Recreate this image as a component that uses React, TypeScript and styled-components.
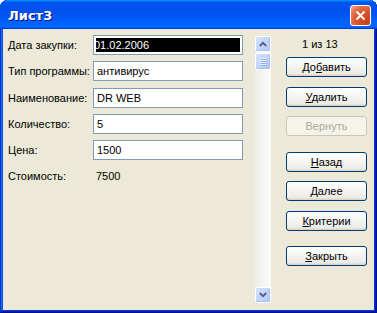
import React from 'react';
import styled, { createGlobalStyle } from 'styled-components';

const GlobalStyle = createGlobalStyle`
  html, body {
    margin: 0;
    padding: 0;
    background: #ffffff;
  }
  body {
    font-family: 'Liberation Sans', Arial, sans-serif;
    font-size: 11px;
  }
`;

const Window = styled.div`
  width: 377px;
  height: 313px;
  display: flex;
  flex-direction: column;
  border-radius: 8px 8px 0 0;
  overflow: hidden;
  background: #0055e5;
  box-shadow: inset -1px -1px #00138c, inset 1px 1px #0831d9, inset -2px -2px #001ea0,
    inset 2px 2px #166aee, inset -3px -3px #003bda, inset 3px 3px #0855dd;
`;

const TitleBar = styled.div`
  height: 29px;
  flex: none;
  display: flex;
  align-items: center;
  justify-content: space-between;
  padding: 0 6px 0 8px;
  box-sizing: border-box;
  background: linear-gradient(
    180deg,
    #0997ff,
    #0053ee 8%,
    #0050ee 40%,
    #0066ff 88%,
    #0066ff 93%,
    #005bff 95%,
    #003dd7 96%,
    #003dd7
  );
`;

const Title = styled.span`
  color: #ffffff;
  font-family: 'DejaVu Sans', 'Liberation Sans', sans-serif;
  font-weight: bold;
  font-size: 13px;
  letter-spacing: 0;
  text-shadow: 1px 1px #0f1089;
  margin-top: 1px;
`;

const CloseButton = styled.div`
  width: 21px;
  height: 21px;
  box-sizing: border-box;
  border: 1px solid #ffffff;
  border-radius: 3px;
  display: flex;
  align-items: center;
  justify-content: center;
  margin-top: 2px;
  background: radial-gradient(circle at 85% 85%, #c63f18 0%, #d8532b 45%, #e5734f 75%, #f2b09a 100%);
`;

const Body = styled.div`
  flex: 1;
  margin: 0 3px 3px 3px;
  background: #ece9d8;
  display: flex;
  align-items: stretch;
  padding: 6px 0 7px 5px;
  box-sizing: border-box;
`;

const Form = styled.div`
  display: grid;
  grid-template-columns: 85px 150px;
  grid-auto-rows: 20px;
  row-gap: 6.25px;
  align-content: start;
`;

const Label = styled.div`
  display: flex;
  align-items: center;
  color: #000000;
  white-space: nowrap;
`;

const Field = styled.div<{ $selected?: boolean }>`
  box-sizing: border-box;
  border: 1px solid #7f9db9;
  background: #ffffff;
  padding: 2px;
  display: flex;
  overflow: hidden;
`;

const FieldText = styled.span<{ $selected?: boolean }>`
  flex: 1;
  display: flex;
  align-items: center;
  padding-left: ${(p) => (p.$selected ? '0' : '1px')};
  text-indent: ${(p) => (p.$selected ? '-2px' : '0')};
  background: ${(p) => (p.$selected ? '#000000' : 'transparent')};
  color: ${(p) => (p.$selected ? '#ffffff' : '#000000')};
  white-space: nowrap;
  overflow: hidden;
`;

const Value = styled.div`
  display: flex;
  align-items: center;
  padding-left: 3px;
`;

const ScrollBar = styled.div`
  width: 16px;
  margin: 1px 0 0 12px;
  display: flex;
  flex-direction: column;
  background: linear-gradient(90deg, #eeede5, #fcfcfe);
`;

const ScrollButton = styled.div`
  width: 16px;
  height: 16px;
  box-sizing: border-box;
  border: 1px solid #ffffff;
  border-radius: 2px;
  background: linear-gradient(135deg, #d7e3fd 0%, #c3d4fb 50%, #b4c8f6 100%);
  box-shadow: inset -1px -1px #a9bff1;
  display: flex;
  align-items: center;
  justify-content: center;
`;

const Thumb = styled(ScrollButton)`
  height: 17px;
  margin-top: 1px;
`;

const Track = styled.div`
  flex: 1;
`;

const Side = styled.div`
  width: 81px;
  margin-left: 15px;
  display: flex;
  flex-direction: column;
  gap: 15.5px;
`;

const Counter = styled.div`
  height: 18px;
  display: flex;
  align-items: center;
  padding-left: 16px;
  margin-bottom: -11.5px;
`;

const ButtonGroup = styled.div`
  display: flex;
  flex-direction: column;
  gap: 9.5px;
`;

const Button = styled.div<{ $disabled?: boolean }>`
  height: 20px;
  box-sizing: border-box;
  border: 1px solid ${(p) => (p.$disabled ? '#c9c7ba' : '#003c74')};
  border-radius: 3px;
  display: flex;
  align-items: center;
  justify-content: center;
  color: ${(p) => (p.$disabled ? '#aca899' : '#000000')};
  background: ${(p) =>
    p.$disabled ? '#f5f4ea' : 'linear-gradient(180deg, #ffffff, #ecebe6 86%, #d6d0c5)'};
  u {
    text-decoration: underline;
    text-underline-offset: 1px;
  }
`;

const Arrow = ({ up }: { up?: boolean }) => (
  <svg width="8" height="6" viewBox="0 0 8 6">
    <path
      d={up ? 'M0.8 5 L4 1.8 L7.2 5' : 'M0.8 1 L4 4.2 L7.2 1'}
      fill="none"
      stroke="#4d6185"
      strokeWidth="1.8"
    />
  </svg>
);

const Grip = () => (
  <svg width="7" height="8" viewBox="0 0 7 8">
    {[0, 2, 4, 6].map((y) => (
      <g key={y}>
        <rect x="0" y={y} width="6" height="1" fill="#eef4fe" />
        <rect x="1" y={y + 1} width="6" height="1" fill="#8cb0f8" />
      </g>
    ))}
  </svg>
);

const fields = [
  { label: 'Дата закупки:', value: '01.02.2006', selected: true },
  { label: 'Тип программы:', value: 'антивирус' },
  { label: 'Наименование:', value: 'DR WEB' },
  { label: 'Количество:', value: '5' },
  { label: 'Цена:', value: '1500' },
];

export default function App() {
  return (
    <>
      <GlobalStyle />
      <Window>
        <TitleBar>
          <Title>Лист3</Title>
          <CloseButton>
            <svg width="11" height="11" viewBox="0 0 11 11">
              <path d="M1.5 1.5 L9.5 9.5 M9.5 1.5 L1.5 9.5" stroke="#ffffff" strokeWidth="2" />
            </svg>
          </CloseButton>
        </TitleBar>
        <Body>
          <Form>
            {fields.map((f) => (
              <React.Fragment key={f.label}>
                <Label>{f.label}</Label>
                <Field>
                  <FieldText $selected={f.selected}>{f.value}</FieldText>
                </Field>
              </React.Fragment>
            ))}
            <Label>Стоимость:</Label>
            <Value>7500</Value>
          </Form>
          <ScrollBar>
            <ScrollButton>
              <Arrow up />
            </ScrollButton>
            <Thumb>
              <Grip />
            </Thumb>
            <Track />
            <ScrollButton>
              <Arrow />
            </ScrollButton>
          </ScrollBar>
          <Side>
            <Counter>1 из 13</Counter>
            <ButtonGroup>
              <Button>
                <span>
                  До<u>б</u>авить
                </span>
              </Button>
              <Button>
                <span>
                  <u>У</u>далить
                </span>
              </Button>
              <Button $disabled>Вернуть</Button>
            </ButtonGroup>
            <ButtonGroup>
              <Button>
                <span>
                  <u>Н</u>азад
                </span>
              </Button>
              <Button>
                <span>
                  <u>Д</u>алее
                </span>
              </Button>
              <Button>
                <span>
                  <u>К</u>ритерии
                </span>
              </Button>
            </ButtonGroup>
            <ButtonGroup>
              <Button>
                <span>
                  <u>З</u>акрыть
                </span>
              </Button>
            </ButtonGroup>
          </Side>
        </Body>
      </Window>
    </>
  );
}
